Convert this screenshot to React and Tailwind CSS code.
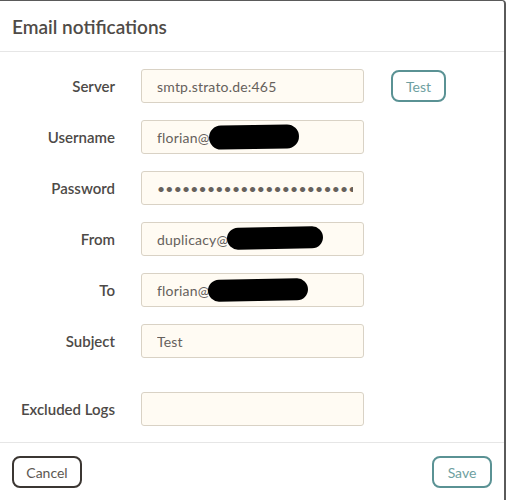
import React from 'react';

const fields = [
  { label: 'Server', value: 'smtp.strato.de:465', test: true },
  { label: 'Username', value: 'florian@', blob: 'left-[68px] top-[5px] w-[90px] h-[24px] -rotate-1' },
  { label: 'Password', value: 'xxxxxxxxxxxxxxxxxxxxxxxxxxxxxxxxxxxxxxxxxx', password: true },
  { label: 'From', value: 'duplicacy@', blob: 'left-[86px] top-[5px] w-[96px] h-[22px] -rotate-1' },
  { label: 'To', value: 'florian@', blob: 'left-[67px] top-[6px] w-[100px] h-[22px] -rotate-1' },
  { label: 'Subject', value: 'Test' },
];

const Field = ({ label, value, test, blob, password }) => (
  <div className="flex items-center h-[34px] shrink-0">
    <label className="w-[115px] text-right text-[15px] font-semibold text-[#4d4a47]">{label}</label>
    <div className="relative ml-[26px] w-[223px] h-[34px]">
      <input
        readOnly
        type={password ? 'password' : 'text'}
        value={value}
        className="w-full h-full rounded-[3px] border border-[#d9d2c5] bg-[#fffbf3] pl-[15px] pr-[10px] text-[14px] tracking-[0.2px] text-[#66615c] outline-none"
      />
      {blob && <span className={`absolute rounded-full bg-black ${blob}`} />}
    </div>
    {test && (
      <button className="ml-[27px] w-[55px] h-[32px] rounded-[8px] border-2 border-[#5a9294] text-[14px] text-[#6e9fa1]">
        Test
      </button>
    )}
  </div>
);

export default function App() {
  return (
    <div className="w-[507px] h-[500px] overflow-hidden bg-white" style={{ fontFamily: 'Lato, "Open Sans", sans-serif' }}>
      <div className="h-[500px] w-[506px] border-t border-r-2 border-[#5a5a5a] rounded-tr-[4px] flex flex-col">
        <div className="h-[51px] shrink-0 border-b border-[#e6e6e6] flex items-center pl-[12px]">
          <h1 className="text-[19px] font-semibold text-[#4f4b47] pt-[2px]">Email notifications</h1>
        </div>
        <div className="flex flex-col gap-[17px] pt-[17px] shrink-0">
          {fields.map((f) => (
            <Field key={f.label} {...f} />
          ))}
          <div className="mt-[17px]">
            <Field label="Excluded Logs" value="" />
          </div>
        </div>
        <div className="mt-[16px] shrink-0 border-t border-[#e6e6e6] flex items-center justify-between px-[12px] pt-[13px]">
          <button className="w-[70px] h-[32px] rounded-[8px] border-2 border-[#3b3632] text-[14px] text-[#5c5752]">
            Cancel
          </button>
          <button className="w-[60px] h-[32px] rounded-[8px] border-2 border-[#5a9294] text-[14px] text-[#6e9fa1]">
            Save
          </button>
        </div>
      </div>
    </div>
  );
}
